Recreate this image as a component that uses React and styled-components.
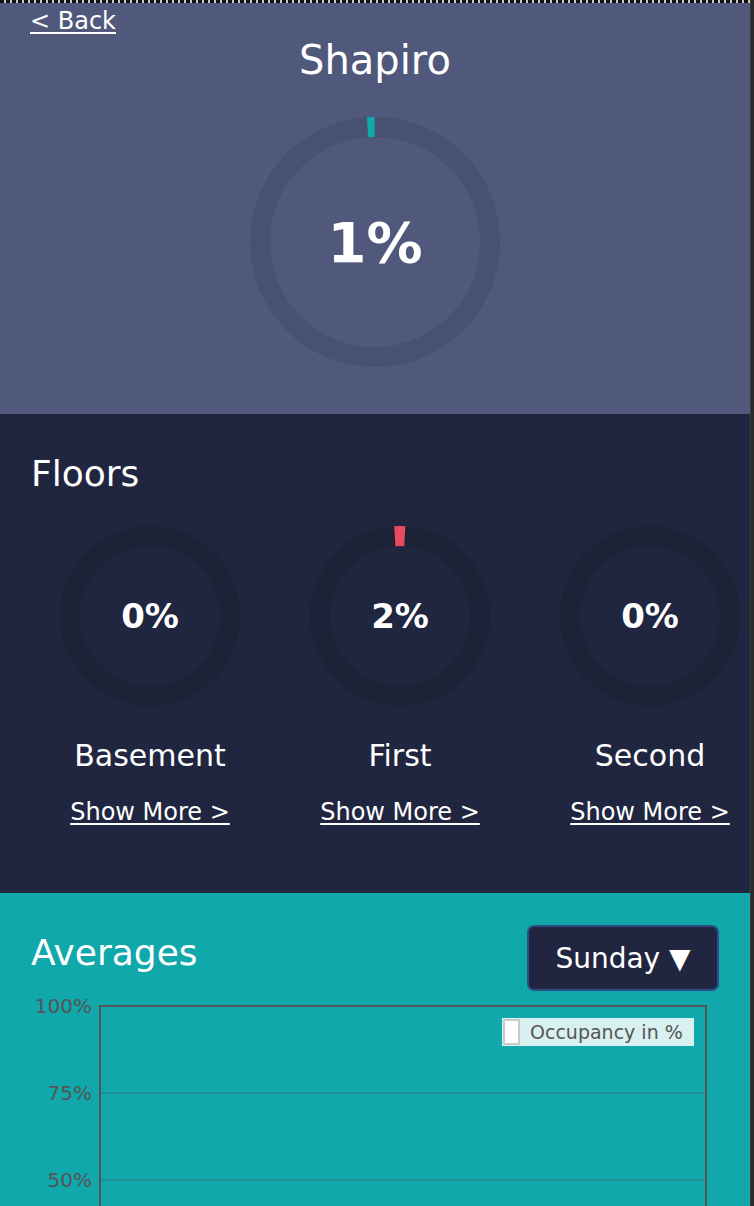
import React, { useState } from "react";
import styled, { createGlobalStyle } from "styled-components";

const GlobalStyle = createGlobalStyle`
    html, body {
        margin: 0;
        padding: 0;
        background: #2d2d2d;
    }
    body {
        font-family: "DejaVu Sans", Verdana, sans-serif;
        color: white;
    }
`;

const Page = styled.div`
    display: flex;
    width: 754px;
    height: 1206px;
    overflow: hidden;
`;

const Main = styled.div`
    width: 750px;
    flex-shrink: 0;
    display: flex;
    flex-direction: column;
`;

const ScrollStrip = styled.div`
    flex: 1;
    background: #2b2b2b;
    border-left: 1px solid #3a3a3a;
`;

const TopStripe = styled.div`
    height: 3px;
    flex-shrink: 0;
    background: repeating-linear-gradient(
        90deg,
        #111 0 4px,
        #c9c9c9 4px 6px
    );
`;

const Header = styled.section`
    background-color: #50597b;
    height: 411px;
    flex-shrink: 0;
    padding: 4px 30px 0;
    box-sizing: border-box;
    display: flex;
    flex-direction: column;
`;

const BackLink = styled.a`
    align-self: flex-start;
    color: white;
    font-size: 24px;
    line-height: 28px;
    text-decoration: underline;
    text-underline-offset: 3px;
    cursor: pointer;
`;

const BuildingName = styled.h1`
    margin: 0;
    text-align: center;
    font-size: 40px;
    font-weight: normal;
    line-height: 48px;
    margin-top: 1px;
`;

const RingWrap = styled.div`
    position: relative;
    width: ${(p) => p.size}px;
    height: ${(p) => p.size}px;
    align-self: center;
    margin-top: ${(p) => p.top || 0}px;
    flex-shrink: 0;
`;

const RingLabel = styled.div`
    position: absolute;
    inset: 0;
    display: flex;
    align-items: center;
    justify-content: center;
    font-weight: bold;
    font-size: ${(p) => p.fontSize}px;
    color: white;
`;

const FloorsSection = styled.section`
    background-color: #212640;
    height: 479px;
    flex-shrink: 0;
    box-sizing: border-box;
    padding-top: 38px;
    overflow: hidden;
`;

const SectionTitle = styled.h2`
    margin: 0;
    padding-left: 31px;
    font-size: 36px;
    line-height: 44px;
    font-weight: normal;
`;

const FloorRow = styled.div`
    display: flex;
    padding-left: 25px;
    margin-top: 30px;
`;

const FloorCol = styled.div`
    width: 250px;
    flex-shrink: 0;
    display: flex;
    flex-direction: column;
    align-items: center;
`;

const FloorName = styled.div`
    font-size: 30px;
    line-height: 36px;
    margin-top: 32px;
`;

const ShowMore = styled.a`
    color: white;
    font-size: 24px;
    line-height: 28px;
    margin-top: 24px;
    text-decoration: underline;
    text-underline-offset: 3px;
    cursor: pointer;
`;

const AveragesSection = styled.section`
    background-color: #10a8ab;
    flex: 1 0 auto;
    padding-top: 32px;
`;

const AveragesHead = styled.div`
    display: flex;
    justify-content: space-between;
    align-items: flex-start;
    padding: 0 31px;
`;

const AveragesTitle = styled(SectionTitle)`
    padding-left: 0;
    margin-top: 6px;
`;

const DayButton = styled.button`
    width: 192px;
    height: 66px;
    background: #212640;
    border: 2px solid #2c4f88;
    border-radius: 7px;
    color: white;
    font-family: "DejaVu Sans", Verdana, sans-serif;
    font-size: 28px;
    cursor: pointer;
`;

const ChartSvg = styled.svg`
    display: block;
    margin-top: 5px;
`;

const Ring = ({ size, value, color, track, fontSize, top }) => {
    const sw = 20;
    const r = (size - sw) / 2;
    const c = size / 2;
    const circ = 2 * Math.PI * r;
    const len = (circ * value) / 100;
    return (
        <RingWrap size={size} top={top}>
            <svg width={size} height={size}>
                <circle cx={c} cy={c} r={r} fill="none" stroke={track} strokeWidth={sw} />
                {value > 0 && (
                    <circle
                        cx={c}
                        cy={c}
                        r={r}
                        fill="none"
                        stroke={color}
                        strokeWidth={sw}
                        strokeDasharray={`${len} ${circ}`}
                        transform={`rotate(-93.7 ${c} ${c})`}
                    />
                )}
            </svg>
            <RingLabel fontSize={fontSize}>{value}%</RingLabel>
        </RingWrap>
    );
};

const floors = [
    { name: "Basement", value: 0 },
    { name: "First", value: 2 },
    { name: "Second", value: 0 },
];

const OccupancyChart = () => {
    const left = 100;
    const right = 706;
    const top = 10;
    const step = 87;
    const ticks = ["100%", "75%", "50%", "25%", "0%"];
    return (
        <ChartSvg width="750" height="400">
            {ticks.map((t, i) =>
                i > 0 && i < 4 ? (
                    <line
                        key={"g" + t}
                        x1={left}
                        x2={right}
                        y1={top + i * step}
                        y2={top + i * step}
                        stroke="#1f9194"
                        strokeWidth="2"
                    />
                ) : null
            )}
            <rect
                x={left}
                y={top}
                width={right - left}
                height={step * 4}
                fill="none"
                stroke="#555"
                strokeWidth="2"
            />
            {ticks.map((t, i) => (
                <text
                    key={t}
                    x={92}
                    y={top + i * step + 7}
                    textAnchor="end"
                    fontSize="20"
                    fill="#555"
                    fontFamily="DejaVu Sans, Verdana, sans-serif">
                    {t}
                </text>
            ))}
            <rect x="502" y="22" width="192" height="28" fill="#d8f0f0" />
            <rect x="504" y="24" width="15" height="24" fill="#fff" stroke="#c8c8c8" strokeWidth="2" />
            <text
                x="530"
                y="43"
                fontSize="19"
                fill="#555"
                fontFamily="DejaVu Sans, Verdana, sans-serif">
                Occupancy in %
            </text>
        </ChartSvg>
    );
};

const App = () => {
    const [day] = useState("Sunday");

    return (
        <Page>
            <GlobalStyle />
            <Main>
                <TopStripe />
                <Header>
                    <BackLink>&lt; Back</BackLink>
                    <BuildingName>Shapiro</BuildingName>
                    <Ring size={250} value={1} color="#10a8ab" track="#485172" fontSize={56} top={33} />
                </Header>
                <FloorsSection>
                    <SectionTitle>Floors</SectionTitle>
                    <FloorRow>
                        {floors.map((f) => (
                            <FloorCol key={f.name}>
                                <Ring size={180} value={f.value} color="#e84a5f" track="#1e2237" fontSize={34} />
                                <FloorName>{f.name}</FloorName>
                                <ShowMore>Show More &gt;</ShowMore>
                            </FloorCol>
                        ))}
                    </FloorRow>
                </FloorsSection>
                <AveragesSection>
                    <AveragesHead>
                        <AveragesTitle>Averages</AveragesTitle>
                        <DayButton>{day} ▼</DayButton>
                    </AveragesHead>
                    <OccupancyChart />
                </AveragesSection>
            </Main>
            <ScrollStrip />
        </Page>
    );
};

export default App;
